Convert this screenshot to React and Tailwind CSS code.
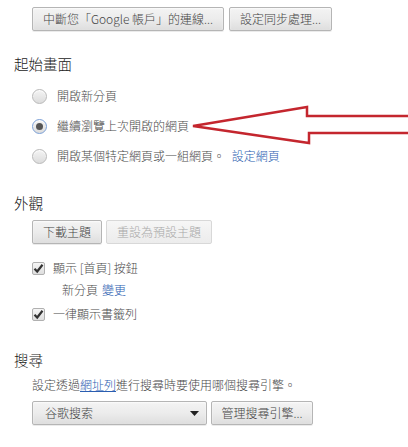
import React from "react";

const btn =
  "h-[24px] flex items-center rounded-[2px] border border-[#b5b5b5] bg-gradient-to-b from-[#f3f3f3] via-[#ececec] to-[#dedede] text-[12px] text-[#444] shadow-[0_1px_0_rgba(0,0,0,0.08),inset_0_1px_2px_rgba(255,255,255,0.75)]";

const Radio = ({ checked }) => (
  <span
    className={
      "w-[15px] h-[15px] rounded-full border flex items-center justify-center bg-gradient-to-b from-[#f4f4f4] to-[#dcdcdc] shadow-[inset_0_1px_1px_rgba(255,255,255,0.9)] " +
      (checked ? "border-[#7a9fd6]" : "border-[#b9b9b9]")
    }
  >
    {checked && <span className="w-[7px] h-[7px] rounded-full bg-[#555]" />}
  </span>
);

const Check = () => (
  <span className="w-[13px] h-[13px] rounded-[2px] border border-[#b0b0b0] bg-gradient-to-b from-[#f6f6f6] to-[#dedede] flex items-center justify-center">
    <svg width="11" height="11" viewBox="0 0 11 11">
      <path d="M1.5 5.8 L4.2 8.5 L9.5 1.8" fill="none" stroke="#333" strokeWidth="2.2" />
    </svg>
  </span>
);

const RadioRow = ({ checked, children }) => (
  <div className="h-[30px] flex items-center gap-[10px] pl-[32px]">
    <Radio checked={checked} />
    <span>{children}</span>
  </div>
);

export default function App() {
  return (
    <div
      className="relative w-[408px] h-[447px] overflow-hidden bg-white text-[12px] font-light text-[#4a4a4a] leading-[20px]"
      style={{ fontFamily: '"Noto Sans CJK TC", "Noto Sans", sans-serif' }}
    >
      <div className="flex gap-[5px] pl-[32px] pt-[7px]">
        <button className={btn + " justify-center w-[192px]"}>中斷您「Google 帳戶」的連線...</button>
        <button className={btn + " justify-center w-[103px]"}>設定同步處理...</button>
      </div>

      <h2 className="mt-[23px] pl-[14px] text-[14.5px] font-light text-[#1a1a1a]">起始畫面</h2>
      <div className="mt-[7px]">
        <RadioRow>開啟新分頁</RadioRow>
        <RadioRow checked>繼續瀏覽上次開啟的網頁</RadioRow>
        <RadioRow>
          開啟某個特定網頁或一組網頁。 <span className="ml-[4px] text-[#2a5db0]">設定網頁</span>
        </RadioRow>
      </div>

      <h2 className="mt-[22px] pl-[14px] text-[14.5px] font-light text-[#1a1a1a]">外觀</h2>
      <div className="mt-[7px] flex gap-[4px] pl-[32px]">
        <button className={btn + " justify-center w-[70px]"}>下載主題</button>
        <button className="h-[24px] w-[106px] flex items-center justify-center rounded-[2px] border border-[#d8d8d8] bg-gradient-to-b from-[#f6f6f6] to-[#ececec] text-[12px] text-[#a8a8a8]">
          重設為預設主題
        </button>
      </div>
      <div className="mt-[13px] h-[22px] flex items-center gap-[8px] pl-[32px]">
        <Check />
        <span>顯示 [首頁] 按鈕</span>
      </div>
      <div className="h-[22px] flex items-center pl-[62px]">
        新分頁 <span className="ml-[4px] text-[#2a5db0]">變更</span>
      </div>
      <div className="mt-[2px] h-[22px] flex items-center gap-[8px] pl-[32px]">
        <Check />
        <span>一律顯示書籤列</span>
      </div>

      <h2 className="mt-[25px] pl-[14px] text-[14.5px] font-light text-[#1a1a1a]">搜尋</h2>
      <p className="mt-[5px] pl-[32px]">
        設定透過<span className="text-[#2a5db0] underline">網址列</span>進行搜尋時要使用哪個搜尋引擎。
      </p>
      <div className="mt-[6px] flex gap-[4px] pl-[32px]">
        <div className={btn + " justify-between w-[175px] pl-[12px] pr-[7px]"}>
          <span>谷歌搜索</span>
          <svg width="9" height="5" viewBox="0 0 9 5">
            <path d="M0 0 H9 L4.5 5 Z" fill="#222" />
          </svg>
        </div>
        <button className={btn + " justify-center w-[102px]"}>管理搜尋引擎...</button>
      </div>

      <svg className="absolute left-0 top-0 pointer-events-none" width="408" height="447">
        <polygon
          points="193,126 307,107 307,116 412,116 412,133 309,133 309,143"
          fill="none"
          stroke="#c4262e"
          strokeWidth="2.5"
          strokeLinejoin="miter"
        />
      </svg>
    </div>
  );
}
